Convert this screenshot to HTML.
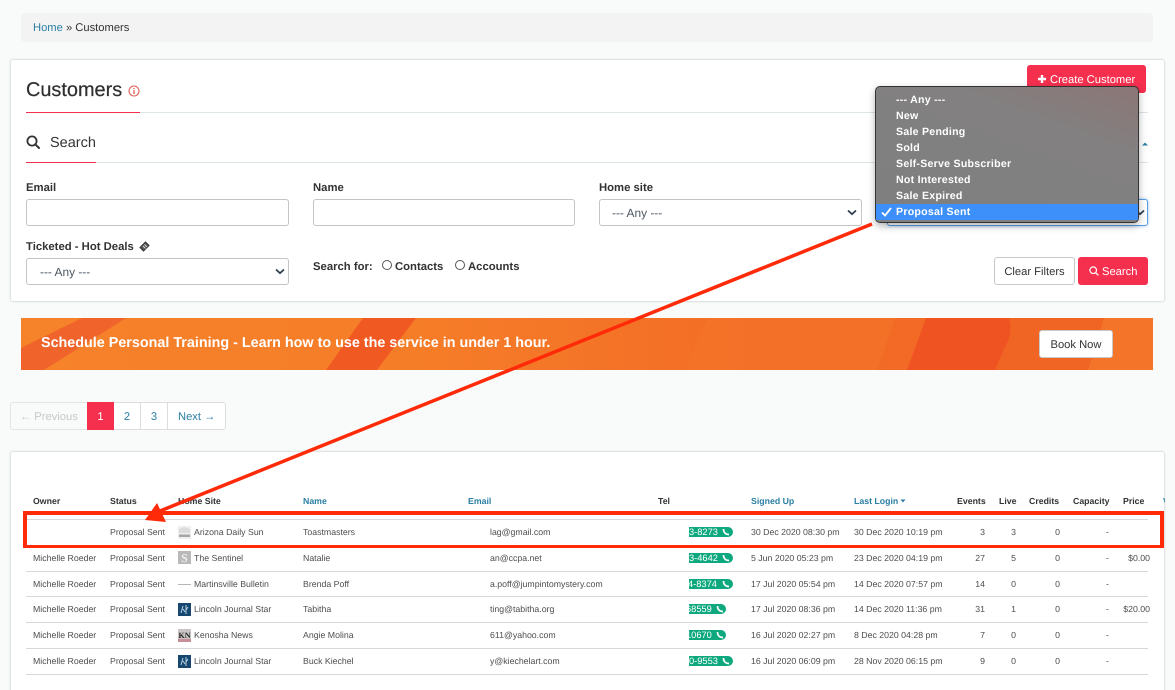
<!DOCTYPE html>
<html><head><meta charset="utf-8"><title>Customers</title>
<style>
*{box-sizing:border-box}
html,body{margin:0;padding:0;width:1175px;height:690px;overflow:hidden}
body{position:relative;background:#f9fbfa;font-family:"Liberation Sans",sans-serif;color:#333;text-rendering:geometricPrecision}
.a{position:absolute;white-space:nowrap}
.card{position:absolute;background:#fff;border:1px solid #e0e6e6;border-radius:3px;box-shadow:0 0 2px rgba(0,0,0,.08)}
.lb{position:absolute;white-space:nowrap;font-size:11.3px;font-weight:bold;line-height:14px;color:#333}
.in{position:absolute;background:#fff;border:1px solid #c4c4c4;border-radius:3px;height:27px}
.sv{position:absolute;white-space:nowrap;font-size:11.9px;line-height:14px;color:#4a5560}
.t{position:absolute;white-space:nowrap;font-size:8.75px;line-height:12px;color:#4d4d4d}
.h{position:absolute;white-space:nowrap;font-size:8.75px;line-height:12px;font-weight:bold;color:#333}
.b{color:#2b7fa3}
.r{text-align:right;width:40px}
.ln{position:absolute;left:26px;width:1122px;height:1px;background:#d8d8d8}
.pill{position:absolute;left:689px;height:10px;background:#0ea87e;border-radius:0 5px 5px 0;color:#fff;font-size:9.3px;line-height:10px;white-space:nowrap;overflow:hidden}
.pill svg{position:absolute;top:1px}
.th{position:absolute;left:178px;width:13px;height:13px}
.opt{position:absolute;left:20px;white-space:nowrap;font-size:10.6px;line-height:16px;color:#fff;font-weight:bold;letter-spacing:.25px}
</style></head><body>

<div class="a" style="left:21px;top:13px;width:1132px;height:29px;background:#f3f3f3;border-radius:4px"></div>
<div class="a" style="left:33px;top:21px;font-size:11.2px;line-height:14px;color:#333"><span class="b">Home</span> » Customers</div>

<div class="card" style="left:10px;top:59px;width:1155px;height:243px"></div>
<div class="a" style="left:26px;top:78px;font-size:19.9px;line-height:24px;color:#2f2f2f;-webkit-text-stroke:.2px #2f2f2f">Customers</div>
<svg class="a" style="left:128px;top:85px" width="12" height="12" viewBox="0 0 12 12"><circle cx="6" cy="6" r="5" fill="none" stroke="#e0605a" stroke-width="1.1"/><rect x="5.3" y="5.2" width="1.4" height="3.8" fill="#e0605a"/><rect x="5.3" y="3" width="1.4" height="1.2" fill="#e0605a"/></svg>
<div class="a" style="left:26px;top:112px;width:1122px;height:1px;background:#dde5e6"></div>
<div class="a" style="left:26px;top:112px;width:114px;height:1px;background:#f5304f"></div>
<svg class="a" style="left:26px;top:135px" width="14" height="14" viewBox="0 0 14 14"><circle cx="6" cy="6" r="4.6" fill="none" stroke="#333" stroke-width="1.8"/><path d="M9.4 9.4L13 13" stroke="#333" stroke-width="2" stroke-linecap="round"/></svg>
<div class="a" style="left:50px;top:134px;font-size:14.5px;line-height:18px;color:#333">Search</div>
<div class="a" style="left:26px;top:162px;width:1122px;height:1px;background:#dde5e6"></div>
<div class="a" style="left:26px;top:162px;width:70px;height:1px;background:#f5304f"></div>
<svg class="a" style="left:1142px;top:142px" width="6" height="4" viewBox="0 0 6 4"><path d="M0 3.5L3 .5L6 3.5Z" fill="#2b7fa3"/></svg>

<div class="lb" style="left:26px;top:181px">Email</div>
<div class="in" style="left:26px;top:199px;width:263px"></div>
<div class="lb" style="left:313px;top:181px">Name</div>
<div class="in" style="left:313px;top:199px;width:262px"></div>
<div class="lb" style="left:599px;top:181px">Home site</div>
<div class="in" style="left:599px;top:199px;width:263px"></div>
<div class="sv" style="left:612px;top:206px">--- Any ---</div>
<svg class="a" style="left:847px;top:209px" width="10" height="7" viewBox="0 0 10 7"><path d="M1 1.5L5 5.2L9 1.5" fill="none" stroke="#2f3e4e" stroke-width="1.8"/></svg>

<div class="lb" style="left:26px;top:240px">Ticketed - Hot Deals</div>
<svg class="a" style="left:139px;top:241px" width="11" height="11" viewBox="0 0 11 11"><path d="M1 6.5L6.5 1L10 4.5L4.5 10Z" fill="#555" stroke="#333" stroke-width="1"/><path d="M4 5L6.5 7.5M5.5 3.5L8 6" stroke="#fff" stroke-width=".8"/></svg>
<div class="in" style="left:26px;top:258px;width:263px"></div>
<div class="sv" style="left:40px;top:265px">--- Any ---</div>
<svg class="a" style="left:275px;top:268px" width="10" height="7" viewBox="0 0 10 7"><path d="M1 1.5L5 5.2L9 1.5" fill="none" stroke="#2f3e4e" stroke-width="1.8"/></svg>

<div class="lb" style="left:313px;top:260px">Search for:</div>
<div class="a" style="left:382px;top:260px;width:10px;height:10px;border:1px solid #555;border-radius:50%;background:#fff"></div>
<div class="lb" style="left:395px;top:260px">Contacts</div>
<div class="a" style="left:455px;top:260px;width:10px;height:10px;border:1px solid #555;border-radius:50%;background:#fff"></div>
<div class="lb" style="left:468px;top:260px">Accounts</div>

<div class="a" style="left:994px;top:257px;width:81px;height:28px;background:#fff;border:1px solid #c8c8c8;border-radius:3px;font-size:11.2px;line-height:29px;text-align:center;color:#333">Clear Filters</div>
<div class="a" style="left:1078px;top:257px;width:70px;height:28px;background:#f5304f;border-radius:3px;font-size:11.2px;line-height:30px;color:#fff;padding-left:24px">Search</div>
<svg class="a" style="left:1089px;top:266px" width="10" height="10" viewBox="0 0 10 10"><circle cx="4.2" cy="4.2" r="3.3" fill="none" stroke="#fff" stroke-width="1.2"/><path d="M6.6 6.6L9.4 9.4" stroke="#fff" stroke-width="1.3"/></svg>

<div class="a" style="left:1027px;top:65px;width:119px;height:28px;background:#f5304f;border-radius:3px;font-size:11.2px;line-height:30px;color:#fff;padding-left:23px">Create Customer</div>
<svg class="a" style="left:1037px;top:74px" width="10" height="10" viewBox="0 0 10 10"><path d="M5 1V9M1 5H9" stroke="#fff" stroke-width="2.4"/></svg>

<div class="a" style="left:887px;top:199px;width:261px;height:27px;background:#fff;border:1px solid #5a9fe0;border-radius:3px;box-shadow:0 0 3px rgba(60,140,230,.5)"></div>
<svg class="a" style="left:1135px;top:209px" width="10" height="7" viewBox="0 0 10 7"><path d="M1 1.5L5 5.2L9 1.5" fill="none" stroke="#2f3e4e" stroke-width="1.8"/></svg>

<!-- banner -->
<div class="a" style="left:21px;top:318px;width:1132px;height:52px;overflow:hidden;background:linear-gradient(90deg,#f6822a 0%,#f67d28 35%,#f26c26 65%,#f26824 100%)">
<svg width="1132" height="52" style="position:absolute;left:0;top:0">
<path d="M0 30L61 0H105L23 52H0Z" fill="#f0632a"/>
<path d="M305 52L342 0H395L356 52Z" fill="#f05a22"/>
<path d="M663 52L687 0H874L856 52Z" fill="#f4742a" opacity=".55"/>
<path d="M886 52L905 0H988Q992 14 986 25L974 52Z" fill="#ef5321"/>
<path d="M1067 52L1083 0H1132V52Z" fill="#f4752a"/>
<path d="M988 0H1083L1067 52H974L986 25Q992 14 988 0Z" fill="#f06424"/>
</svg>
<div class="a" style="left:20px;top:16px;font-size:14.35px;line-height:18px;font-weight:bold;color:#fff">Schedule Personal Training - Learn how to use the service in under 1 hour.</div>
<div class="a" style="left:1018px;top:12px;width:74px;height:28px;background:#fff;border:1px solid #c8c8c8;border-radius:3px;font-size:11.2px;line-height:29px;text-align:center;color:#333">Book Now</div>
</div>

<!-- pagination -->
<div class="a" style="left:10px;top:402px;width:216px;height:28px;background:#fff;border:1px solid #dcdcdc;border-radius:3px"></div>
<div class="a" style="left:10px;top:402px;width:77px;height:28px;background:#f9fbfa;border:1px solid #e4e6e6;border-right:0;border-radius:3px 0 0 3px;font-size:11.2px;line-height:29px;color:#c4c9c9;padding-left:9px">← Previous</div>
<div class="a" style="left:87px;top:402px;width:27px;height:28px;background:#f5304f;font-size:11.2px;line-height:31px;text-align:center;color:#fff">1</div>
<div class="a" style="left:114px;top:402px;width:27px;height:28px;border-right:1px solid #dcdcdc;font-size:11.2px;line-height:31px;text-align:center;color:#2b7fa3">2</div>
<div class="a" style="left:141px;top:402px;width:27px;height:28px;border-right:1px solid #dcdcdc;font-size:11.2px;line-height:31px;text-align:center;color:#2b7fa3">3</div>
<div class="a" style="left:178px;top:402px;font-size:11.2px;line-height:31px;color:#2b7fa3">Next →</div>

<!-- table card -->
<div class="card" style="left:10px;top:451px;width:1155px;height:245px"></div>
<div class="h" style="left:33px;top:495px">Owner</div>
<div class="h" style="left:110px;top:495px">Status</div>
<div class="h" style="left:178px;top:495px">Home Site</div>
<div class="h b" style="left:303px;top:495px">Name</div>
<div class="h b" style="left:468px;top:495px">Email</div>
<div class="h" style="left:658px;top:495px">Tel</div>
<div class="h b" style="left:751px;top:495px">Signed Up</div>
<div class="h b" style="left:854px;top:495px">Last Login</div>
<svg class="a" style="left:900px;top:499px" width="6" height="4"><path d="M.5 .5H5.5L3 3.5Z" fill="#2b7fa3"/></svg>
<div class="h" style="left:957px;top:495px">Events</div>
<div class="h" style="left:999px;top:495px">Live</div>
<div class="h" style="left:1029px;top:495px">Credits</div>
<div class="h" style="left:1073px;top:495px">Capacity</div>
<div class="h" style="left:1123px;top:495px">Price</div>
<div class="h" style="left:1163px;top:495px;color:#2b7fa3;width:2px;overflow:hidden">V</div>

<div class="ln" style="top:519px"></div>
<div class="ln" style="top:571px"></div>
<div class="ln" style="top:596px"></div>
<div class="ln" style="top:622px"></div>
<div class="ln" style="top:648px"></div>
<div class="ln" style="top:674px"></div>

<!-- row 1 -->
<div class="t" style="left:110px;top:526px">Proposal Sent</div>
<svg class="th" style="top:526px" viewBox="0 0 13 13"><rect width="13" height="13" fill="#efefef"/><path d="M1 3L6.5 1L12 3V7H1Z" fill="#dcdcdc"/><rect x="1" y="8.5" width="11" height="2.5" fill="#a5a5a5"/></svg>
<div class="t" style="left:194px;top:526px">Arizona Daily Sun</div>
<div class="t" style="left:303px;top:526px">Toastmasters</div>
<div class="t" style="left:490px;top:526px">lag@gmail.com</div>
<div class="pill" style="top:527px;width:44px">3-8273<svg style="left:33px" width="8" height="8" viewBox="0 0 8 8"><path d="M1.5 1C1.5 4.5 3.5 6.5 7 6.5" fill="none" stroke="#fff" stroke-width="1.7"/></svg></div>
<div class="t" style="left:751px;top:526px">30 Dec 2020 08:30 pm</div>
<div class="t" style="left:854px;top:526px">30 Dec 2020 10:19 pm</div>
<div class="t r" style="left:945px;top:526px">3</div>
<div class="t r" style="left:976px;top:526px">3</div>
<div class="t r" style="left:1020px;top:526px">0</div>
<div class="t" style="left:1106px;top:526px">-</div>

<!-- row 2 -->
<div class="t" style="left:33px;top:552px">Michelle Roeder</div>
<div class="t" style="left:110px;top:552px">Proposal Sent</div>
<svg class="th" style="top:551px" viewBox="0 0 13 13"><rect width="13" height="13" fill="#b9b9b9"/><text x="6.5" y="11" font-family="Liberation Serif,serif" font-size="12" font-weight="bold" fill="#eee" text-anchor="middle">S</text></svg>
<div class="t" style="left:194px;top:552px">The Sentinel</div>
<div class="t" style="left:303px;top:552px">Natalie</div>
<div class="t" style="left:490px;top:552px">an@ccpa.net</div>
<div class="pill" style="top:553px;width:44px">3-4642<svg style="left:33px" width="8" height="8" viewBox="0 0 8 8"><path d="M1.5 1C1.5 4.5 3.5 6.5 7 6.5" fill="none" stroke="#fff" stroke-width="1.7"/></svg></div>
<div class="t" style="left:751px;top:552px">5 Jun 2020 05:23 pm</div>
<div class="t" style="left:854px;top:552px">23 Dec 2020 04:19 pm</div>
<div class="t r" style="left:945px;top:552px">27</div>
<div class="t r" style="left:976px;top:552px">5</div>
<div class="t r" style="left:1020px;top:552px">0</div>
<div class="t" style="left:1106px;top:552px">-</div>
<div class="t r" style="left:1110px;top:552px">$0.00</div>

<!-- row 3 -->
<div class="t" style="left:33px;top:578px">Michelle Roeder</div>
<div class="t" style="left:110px;top:578px">Proposal Sent</div>
<div class="a" style="left:178px;top:584px;width:13px;height:1px;background:#b5b5b5"></div>
<div class="t" style="left:194px;top:578px">Martinsville Bulletin</div>
<div class="t" style="left:303px;top:578px">Brenda Poff</div>
<div class="t" style="left:490px;top:578px">a.poff@jumpintomystery.com</div>
<div class="pill" style="top:579px;width:44px;text-indent:-1px">4-8374<svg style="left:33px" width="8" height="8" viewBox="0 0 8 8"><path d="M1.5 1C1.5 4.5 3.5 6.5 7 6.5" fill="none" stroke="#fff" stroke-width="1.7"/></svg></div>
<div class="t" style="left:751px;top:578px">17 Jul 2020 05:54 pm</div>
<div class="t" style="left:854px;top:578px">14 Dec 2020 07:57 pm</div>
<div class="t r" style="left:945px;top:578px">14</div>
<div class="t r" style="left:976px;top:578px">0</div>
<div class="t r" style="left:1020px;top:578px">0</div>
<div class="t" style="left:1106px;top:578px">-</div>

<!-- row 4 -->
<div class="t" style="left:33px;top:603px">Michelle Roeder</div>
<div class="t" style="left:110px;top:603px">Proposal Sent</div>
<svg class="th" style="top:603px" viewBox="0 0 13 13"><rect width="13" height="13" fill="#17466e"/><path d="M3 10L5 3M5 6L7 9M8 2V11M10 4L8 7" stroke="#b7d3e6" stroke-width="1" fill="none"/></svg>
<div class="t" style="left:194px;top:603px">Lincoln Journal Star</div>
<div class="t" style="left:303px;top:603px">Tabitha</div>
<div class="t" style="left:490px;top:603px">ting@tabitha.org</div>
<div class="pill" style="top:604px;width:37px"><span style="margin-left:-3px">68559</span><svg style="left:27px" width="8" height="8" viewBox="0 0 8 8"><path d="M1.5 1C1.5 4.5 3.5 6.5 7 6.5" fill="none" stroke="#fff" stroke-width="1.7"/></svg></div>
<div class="t" style="left:751px;top:603px">17 Jul 2020 08:36 pm</div>
<div class="t" style="left:854px;top:603px">14 Dec 2020 11:36 pm</div>
<div class="t r" style="left:945px;top:603px">31</div>
<div class="t r" style="left:976px;top:603px">1</div>
<div class="t r" style="left:1020px;top:603px">0</div>
<div class="t" style="left:1106px;top:603px">-</div>
<div class="t r" style="left:1110px;top:603px">$20.00</div>

<!-- row 5 -->
<div class="t" style="left:33px;top:629px">Michelle Roeder</div>
<div class="t" style="left:110px;top:629px">Proposal Sent</div>
<svg class="th" style="top:629px" viewBox="0 0 13 13"><rect width="13" height="13" fill="#c9c4c4"/><rect y="10" width="13" height="3" fill="#c88f98"/><text x="6.5" y="9" font-family="Liberation Serif,serif" font-size="8" font-weight="bold" fill="#222" text-anchor="middle">KN</text></svg>
<div class="t" style="left:194px;top:629px">Kenosha News</div>
<div class="t" style="left:303px;top:629px">Angie Molina</div>
<div class="t" style="left:490px;top:629px">611@yahoo.com</div>
<div class="pill" style="top:630px;width:37px"><span style="margin-left:-3px">10670</span><svg style="left:27px" width="8" height="8" viewBox="0 0 8 8"><path d="M1.5 1C1.5 4.5 3.5 6.5 7 6.5" fill="none" stroke="#fff" stroke-width="1.7"/></svg></div>
<div class="t" style="left:751px;top:629px">16 Jul 2020 02:27 pm</div>
<div class="t" style="left:854px;top:629px">8 Dec 2020 04:28 pm</div>
<div class="t r" style="left:945px;top:629px">7</div>
<div class="t r" style="left:976px;top:629px">0</div>
<div class="t r" style="left:1020px;top:629px">0</div>
<div class="t" style="left:1106px;top:629px">-</div>

<!-- row 6 -->
<div class="t" style="left:33px;top:655px">Michelle Roeder</div>
<div class="t" style="left:110px;top:655px">Proposal Sent</div>
<svg class="th" style="top:655px" viewBox="0 0 13 13"><rect width="13" height="13" fill="#17466e"/><path d="M3 10L5 3M5 6L7 9M8 2V11M10 4L8 7" stroke="#b7d3e6" stroke-width="1" fill="none"/></svg>
<div class="t" style="left:194px;top:655px">Lincoln Journal Star</div>
<div class="t" style="left:303px;top:655px">Buck Kiechel</div>
<div class="t" style="left:490px;top:655px">y@kiechelart.com</div>
<div class="pill" style="top:656px;width:44px">0-9553<svg style="left:33px" width="8" height="8" viewBox="0 0 8 8"><path d="M1.5 1C1.5 4.5 3.5 6.5 7 6.5" fill="none" stroke="#fff" stroke-width="1.7"/></svg></div>
<div class="t" style="left:751px;top:655px">16 Jul 2020 06:09 pm</div>
<div class="t" style="left:854px;top:655px">28 Nov 2020 06:15 pm</div>
<div class="t r" style="left:945px;top:655px">9</div>
<div class="t r" style="left:976px;top:655px">0</div>
<div class="t r" style="left:1020px;top:655px">0</div>
<div class="t" style="left:1106px;top:655px">-</div>

<!-- annotations -->
<div class="a" style="left:23px;top:511px;width:1141px;height:37px;border:4px solid #ff2a08;border-width:4px 4px 3px 4px"></div>
<svg class="a" style="left:0;top:0" width="1175" height="690"><path d="M872 224L160 511" stroke="#ff2a08" stroke-width="3.5" fill="none"/><path d="M145 520L157 503L166 522Z" fill="#ff2a08"/></svg>

<!-- dropdown -->
<div class="a" style="left:875px;top:86px;width:264px;height:137px;background:linear-gradient(200deg,#8c7676 0%,#828080 30%,#7f7f7f 100%);border:1px solid #333;border-radius:5px;box-shadow:0 3px 8px rgba(0,0,0,.3)">
<div class="opt" style="top:5px">--- Any ---</div>
<div class="opt" style="top:21px">New</div>
<div class="opt" style="top:37px">Sale Pending</div>
<div class="opt" style="top:53px">Sold</div>
<div class="opt" style="top:69px">Self-Serve Subscriber</div>
<div class="opt" style="top:85px">Not Interested</div>
<div class="opt" style="top:101px">Sale Expired</div>
<div class="a" style="left:0;top:117px;width:262px;height:16px;background:#3d8ffa"></div>
<div class="opt" style="top:117px">Proposal Sent</div>
<svg class="a" style="left:5px;top:120px" width="11" height="10" viewBox="0 0 11 10"><path d="M1 5.5L4 8.5L10 1" fill="none" stroke="#fff" stroke-width="1.8"/></svg>
</div>
</body></html>
